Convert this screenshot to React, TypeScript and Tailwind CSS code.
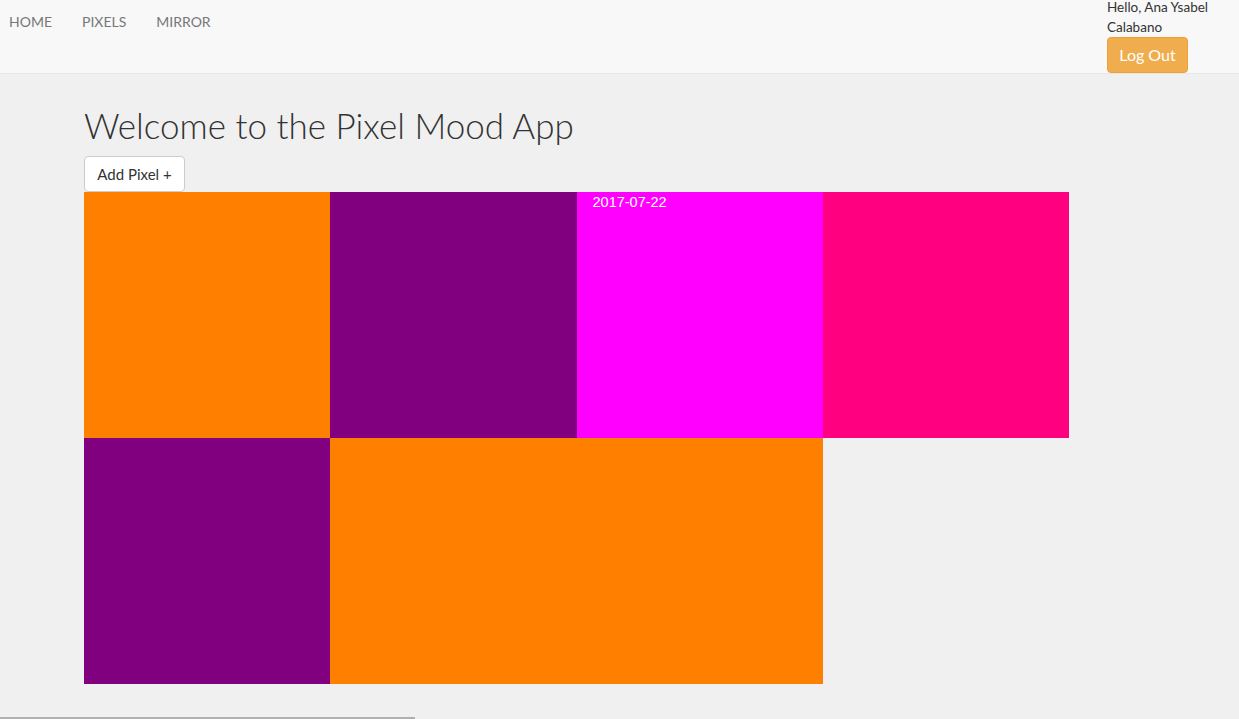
import React from "react";

const cells: { color: string; span?: number; label?: string }[] = [
  { color: "bg-[#ff8000]" },
  { color: "bg-[#800080]" },
  { color: "bg-[#ff00ff]", label: "2017-07-22" },
  { color: "bg-[#ff0080]" },
  { color: "bg-[#800080]" },
  { color: "bg-[#ff8000]", span: 2 },
];

export default function App() {
  return (
    <div
      className="relative min-h-[719px] w-[1239px] overflow-hidden bg-[#f0f0f0] text-[#333]"
      style={{ fontFamily: "Lato, 'Open Sans', sans-serif" }}
    >
      <nav className="flex h-[74px] border-b border-[#e7e7e7] bg-[#f8f8f8]">
        <ul className="flex items-start pl-[9px] pt-[12px] text-[14px] uppercase leading-[20px] text-[#777]">
          <li className="mr-[30px]">Home</li>
          <li className="mr-[30px]">Pixels</li>
          <li>Mirror</li>
        </ul>
        <div className="ml-auto mr-[21px] flex w-[111px] flex-col items-start">
          <p className="mt-[-3px] text-[13.5px] leading-[20px] text-[#333]">
            Hello, Ana Ysabel Calabano
          </p>
          <button className="h-[36px] w-[81px] rounded-[4px] border border-[#eea236] bg-[#f0ad4e] text-[16px] text-white">
            Log Out
          </button>
        </div>
      </nav>

      <main className="pl-[84px]">
        <h1 className="mt-[25px] text-[35px] font-light leading-[52px] text-[#333]">
          Welcome to the Pixel Mood App
        </h1>
        <button className="mt-[5px] h-[36px] w-[101px] rounded-[4px] border border-[#ccc] bg-white text-[15px] text-[#333]">
          Add Pixel +
        </button>
        <div className="grid w-[985px] grid-cols-4 auto-rows-[246px]">
          {cells.map((c, i) => (
            <div
              key={i}
              className={`${c.color} ${c.span === 2 ? "col-span-2" : ""} px-[16px]`}
            >
              {c.label && (
                <div
                  className="text-[14.5px] leading-[20px] text-white"
                  style={{ fontFamily: "'Liberation Sans', Arial, sans-serif" }}
                >
                  {c.label}
                </div>
              )}
            </div>
          ))}
        </div>
      </main>

      <div className="absolute bottom-0 left-0 h-[2px] w-[415px] bg-[#b0b0b0]" />
    </div>
  );
}
